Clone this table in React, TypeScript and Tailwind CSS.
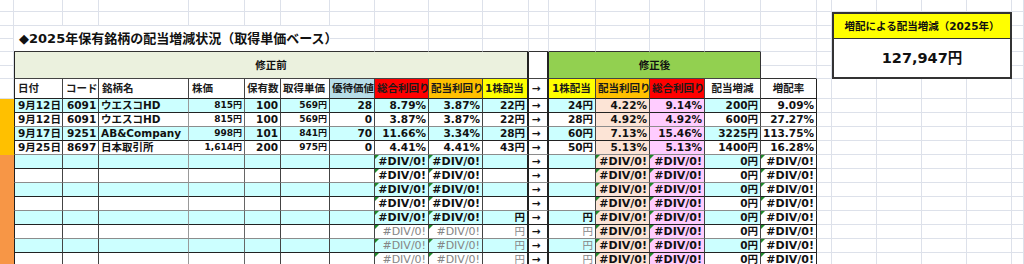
import React from "react";

type BgProps = { r?: string; b?: string; fill?: string };

function Bg({ r = "border-r-[#dde1ea]", b = "border-b-[#dde1ea]", fill = "bg-white" }: BgProps) {
  return <div className={`border-r border-b ${r} ${b} ${fill}`} />;
}

const colCls: string[] = [
  "border-l border-l-[#222] border-r border-r-[#444] justify-start pl-[3px] text-[10.5px]",
  "border-r border-r-[#444] justify-start pl-[4px] text-[10.5px]",
  "border-r border-r-[#999] justify-start pl-[2px] text-[10.5px]",
  "border-r border-r-[#666] justify-end pr-[2px] text-[9px]",
  "border-r border-r-[#444] justify-end pr-[2px] text-[10.5px]",
  "border-r border-r-[#444] justify-end pr-[2px] text-[9px]",
  "border-r border-r-[#444] justify-end pr-[2px] text-[10.5px]",
  "border-r border-r-[#444] justify-end pr-[2px] text-[10.5px]",
  "border-r border-r-[#444] justify-end pr-[2px] text-[10.5px]",
  "border-r-2 border-r-[#222] justify-end pr-[2px] text-[10.5px]",
  "border-r-2 border-r-[#222] justify-start pl-[3px] text-[10.5px]",
  "border-r border-r-[#444] justify-end pr-[2px] text-[10.5px]",
  "border-r border-r-[#444] justify-end pr-[2px] text-[10.5px]",
  "border-r border-r-[#444] justify-end pr-[2px] text-[10.5px]",
  "border-r border-r-[#444] justify-end pr-[2px] text-[10.5px]",
  "border-r border-r-[#222] justify-end pr-[2px] text-[10.5px]",
];

// 'a' alternate, 'w' white, 'p' peach, 'k' pink
const colBg = ["a", "a", "a", "a", "a", "a", "a", "a", "a", "a", "w", "a", "p", "k", "a", "w"];

const headers: { t: string; cls: string }[] = [
  { t: "日付", cls: "border-l border-l-[#222] border-r border-r-[#444] justify-start pl-[3px] bg-white" },
  { t: "コード", cls: "border-r border-r-[#444] justify-start pl-[3px] bg-white" },
  { t: "銘柄名", cls: "border-r border-r-[#444] justify-start pl-[3px] bg-white" },
  { t: "株価", cls: "border-r border-r-[#444] justify-start pl-[3px] bg-white" },
  { t: "保有数", cls: "border-r border-r-[#444] justify-start pl-[2px] bg-white" },
  { t: "取得単価", cls: "border-r border-r-[#444] justify-start pl-[2px] bg-white" },
  { t: "優待価値", cls: "border-r border-r-[#444] justify-start pl-[2px] bg-[#b7dde8]" },
  { t: "総合利回り", cls: "border-r border-r-[#444] justify-start pl-[2px] bg-[#ff0000]" },
  { t: "配当利回り", cls: "border-r border-r-[#444] justify-start pl-[2px] bg-[#ffc000]" },
  { t: "1株配当", cls: "border-r-2 border-r-[#222] justify-start pl-[2px] bg-[#ffff00]" },
  { t: "→", cls: "border-r-2 border-r-[#222] justify-start pl-[3px] bg-white" },
  { t: "1株配当", cls: "border-r border-r-[#444] justify-start pl-[3px] bg-[#ffff00]" },
  { t: "配当利回り", cls: "border-r border-r-[#444] justify-start pl-[2px] bg-[#ffc000]" },
  { t: "総合利回り", cls: "border-r border-r-[#444] justify-start pl-[2px] bg-[#ff0000]" },
  { t: "配当増減", cls: "border-r border-r-[#444] justify-center bg-white" },
  { t: "増配率", cls: "border-r border-r-[#222] justify-center bg-white" },
];

const D = "#DIV/0!";
const emptyRow = ["", "", "", "", "", "", "", D, D, "", "→", "", D, D, "0円", D];
const yenRow = ["", "", "", "", "", "", "", D, D, "円", "→", "円", D, D, "0円", D];

const rows: string[][] = [
  ["9月12日", "6091", "ウエスコHD", "815円", "100", "569円", "28", "8.79%", "3.87%", "22円", "→", "24円", "4.22%", "9.14%", "200円", "9.09%"],
  ["9月12日", "6091", "ウエスコHD", "815円", "100", "569円", "0", "3.87%", "3.87%", "22円", "→", "28円", "4.92%", "4.92%", "600円", "27.27%"],
  ["9月17日", "9251", "AB&Company", "998円", "101", "841円", "70", "11.66%", "3.34%", "28円", "→", "60円", "7.13%", "15.46%", "3225円", "113.75%"],
  ["9月25日", "8697", "日本取引所", "1,614円", "200", "975円", "0", "4.41%", "4.41%", "43円", "→", "50円", "5.13%", "5.13%", "1400円", "16.28%"],
  emptyRow,
  emptyRow,
  emptyRow,
  emptyRow,
  yenRow,
  yenRow,
  yenRow,
  yenRow,
];

function bgFor(kind: string, ri: number): string {
  if (kind === "w") return "bg-white";
  if (kind === "p") return "bg-[#fce4d6]";
  if (kind === "k") return "bg-[#ffccff]";
  return ri % 2 === 0 ? "bg-[#ccffff]" : "bg-white";
}

function DataCell({ v, ci, ri }: { v: string; ci: number; ri: number }) {
  const bottom = ri % 2 === 0 ? "border-b border-b-[#222]" : "border-b border-b-[#8c8c8c]";
  const gray = ri >= 9 && (ci === 7 || ci === 8 || ci === 9 || ci === 11);
  const tone = gray ? "text-[#858585] font-normal" : "text-[#111] font-bold";
  const isErr = v === D;
  return (
    <div
      className={`relative flex items-center overflow-hidden whitespace-nowrap leading-none ${colCls[ci]} ${bottom} ${bgFor(colBg[ci], ri)} ${tone}`}
    >
      {isErr && (
        <span className="absolute left-0 top-0 h-0 w-0 border-t-[4px] border-r-[4px] border-t-[#1f8a2a] border-r-transparent" />
      )}
      {isErr ? <span className="text-[11px]">{v}</span> : v}
    </div>
  );
}

export default function App() {
  const r1 = Array.from({ length: 23 }, (_, i) => <Bg key={`r1-${i}`} />);
  return (
    <div className="h-[264px] w-[1024px] overflow-hidden bg-white font-['DejaVu_Sans','Noto_Sans_CJK_JP',sans-serif] text-[#111]">
      <div className="grid grid-cols-[14px_49px_36px_90px_56px_36px_49px_45px_54px_54px_46px_20px_47px_54px_55px_56px_56px_15px_45px_45px_45px_45px_12px] grid-rows-[12px_14px_13px_13px_14px_13px_20px_repeat(12,14px)]">
        {/* row 1 */}
        {r1}
        {/* row 2 */}
        {Array.from({ length: 18 }, (_, i) => (
          <Bg key={`r2-${i}`} />
        ))}
        <div className="col-span-4 row-span-2 flex items-center justify-center whitespace-nowrap border-t-2 border-l-2 border-r-2 border-b border-[#333] bg-[#ffff00] text-[10.5px] font-bold leading-none">
          増配による配当増減（2025年）
        </div>
        <Bg />
        {/* row 3 */}
        <Bg />
        <div className="col-span-6 row-span-2 flex items-center whitespace-nowrap border-b border-b-[#333] bg-white pl-[5px] text-[13px] font-bold leading-none">
          ◆2025年保有銘柄の配当増減状況（取得単価ベース）
        </div>
        {Array.from({ length: 11 }, (_, i) => (
          <Bg key={`r3-${i}`} />
        ))}
        <Bg />
        {/* row 4 */}
        <Bg />
        {Array.from({ length: 9 }, (_, i) => (
          <Bg key={`r4-${i}`} b="border-b-[#333]" />
        ))}
        <Bg />
        <Bg />
        <div className="col-span-4 row-span-3 flex items-center justify-center whitespace-nowrap border-l-2 border-r-2 border-b-2 border-[#333] bg-white text-[14.5px] font-bold leading-none">
          127,947円
        </div>
        <Bg />
        {/* row 5 */}
        <Bg />
        <div className="col-span-10 row-span-2 flex items-center justify-center border-l border-r-2 border-b border-l-[#222] border-r-[#222] border-b-[#444] bg-[#ebf1de] text-[10.5px] font-bold leading-none">
          修正前
        </div>
        <div className="row-span-2 border-r-2 border-b border-r-[#222] border-b-[#444] bg-white" />
        <div className="col-span-4 row-span-2 flex items-center justify-center border-r border-b border-r-[#333] border-b-[#444] bg-[#92d050] text-[10.5px] font-bold leading-none">
          修正後
        </div>
        <Bg />
        <Bg />
        <Bg />
        {/* row 6 */}
        <Bg />
        <Bg b="border-b-[#333]" />
        <Bg />
        <Bg />
        {/* row 7 headers */}
        <Bg />
        {headers.map((h, i) => (
          <div
            key={`h-${i}`}
            className={`flex items-center overflow-hidden whitespace-nowrap border-b border-b-[#222] text-[10.5px] font-bold leading-none text-[#1a1a1a] ${h.cls}`}
          >
            {h.t}
          </div>
        ))}
        <Bg />
        <Bg />
        <Bg />
        <Bg />
        <Bg />
        <Bg />
        {/* data rows */}
        {rows.map((row, ri) => (
          <React.Fragment key={`row-${ri}`}>
            <div className={ri < 4 ? "bg-[#ffc000]" : "bg-[#f79646]"} />
            {row.map((v, ci) => (
              <DataCell key={`c-${ri}-${ci}`} v={v} ci={ci} ri={ri} />
            ))}
            <Bg />
            <Bg />
            <Bg />
            <Bg />
            <Bg />
            <Bg />
          </React.Fragment>
        ))}
      </div>
    </div>
  );
}
